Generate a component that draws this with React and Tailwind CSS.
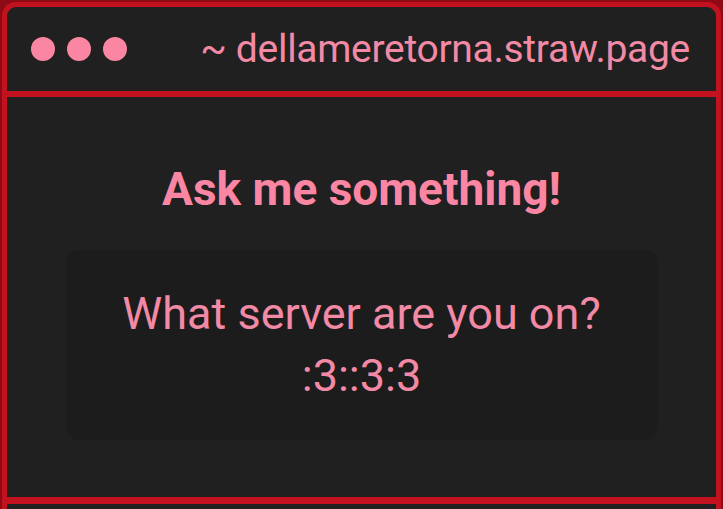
import React from "react";

const App = () => {
  return (
    <div
      className="w-[723px] h-[509px] overflow-hidden bg-[#8e0b16] px-[2px] pt-[2px]"
      style={{ fontFamily: "Roboto, 'Noto Sans', sans-serif" }}
    >
      <div className="h-[600px] rounded-t-[14px] border-[5px] border-b-0 border-[#c3121f] bg-[#202020] flex flex-col">
        {/* Title bar */}
        <div className="h-[90px] flex items-center border-b-[6px] border-[#c3121f] pl-[24px] pr-[26px]">
          <div className="flex gap-[12px]">
            <span className="w-[24px] h-[24px] rounded-full bg-[#fb86a3]" />
            <span className="w-[24px] h-[24px] rounded-full bg-[#fb86a3]" />
            <span className="w-[24px] h-[24px] rounded-full bg-[#fb86a3]" />
          </div>
          <div className="ml-auto text-[39px] text-[#f28aa6] leading-none tracking-[-0.3px]">
            ~ dellameretorna.straw.page
          </div>
        </div>

        {/* Question */}
        <div className="h-[407px] border-b-[7px] border-[#c3121f] flex flex-col items-center pt-[69px]">
          <h1 className="text-[46px] font-bold text-[#fb86a3] leading-none">
            Ask me something!
          </h1>
          <div className="mt-[38px] w-[592px] h-[190px] rounded-[14px] bg-[#1c1c1c] flex flex-col items-center justify-center text-[#f28aa6] text-[45px] leading-[62px]">
            <p>What server are you on?</p>
            <p>:3::3:3</p>
          </div>
        </div>
        <div className="flex-1" />
      </div>
    </div>
  );
};

export default App;
